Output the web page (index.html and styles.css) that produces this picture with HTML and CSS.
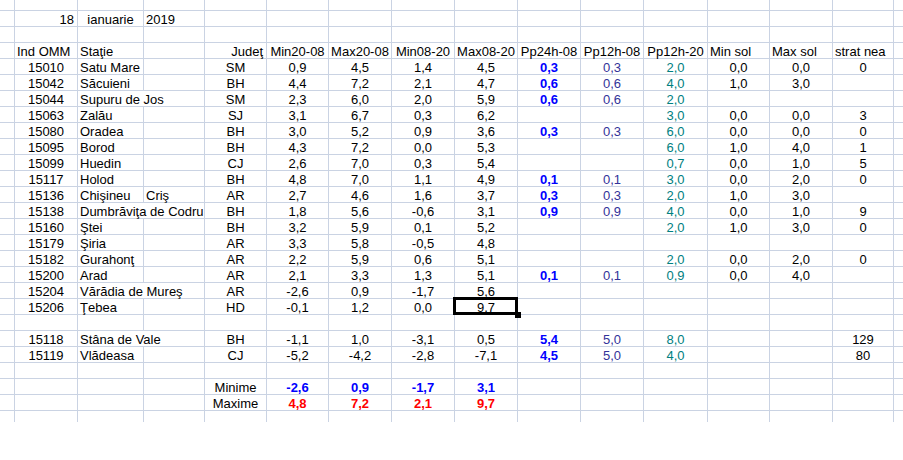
FILE: index.html
```html
<!DOCTYPE html>
<html>
<head>
<meta charset="utf-8">
<link rel="stylesheet" href="styles.css">
</head>
<body>
<table class="sheet">
<colgroup>
<col class="w15"><col class="w63"><col class="w66"><col class="w61"><col class="w62"><col class="w62"><col class="w63"><col class="w63"><col class="w63"><col class="w63"><col class="w63"><col class="w64"><col class="w62"><col class="w63"><col class="w61"><col class="w9">
</colgroup>
<tr class="top"><td></td><td></td><td></td><td></td><td></td><td></td><td></td><td></td><td></td><td></td><td></td><td></td><td></td><td></td><td></td><td></td></tr>
<tr><td></td><td class="rt">18</td><td>ianuarie</td><td class="l">2019</td><td></td><td></td><td></td><td></td><td></td><td></td><td></td><td></td><td></td><td></td><td></td><td></td></tr>
<tr><td></td><td></td><td></td><td></td><td></td><td></td><td></td><td></td><td></td><td></td><td></td><td></td><td></td><td></td><td></td><td></td></tr>
<tr><td></td><td class="l">Ind OMM</td><td class="l">Staţie</td><td></td><td class="rt">Judeţ</td><td>Min20-08</td><td>Max20-08</td><td>Min08-20</td><td>Max08-20</td><td>Pp24h-08</td><td>Pp12h-08</td><td>Pp12h-20</td><td class="l">Min sol</td><td class="l">Max sol</td><td class="l">strat nea</td><td></td></tr>
<tr><td></td><td>15010</td><td class="l">Satu Mare</td><td></td><td>SM</td><td>0,9</td><td>4,5</td><td>1,4</td><td>4,5</td><td class="b">0,3</td><td class="db">0,3</td><td class="tl">2,0</td><td>0,0</td><td>0,0</td><td>0</td><td></td></tr>
<tr><td></td><td>15042</td><td class="l">Săcuieni</td><td></td><td>BH</td><td>4,4</td><td>7,2</td><td>2,1</td><td>4,7</td><td class="b">0,6</td><td class="db">0,6</td><td class="tl">4,0</td><td>1,0</td><td>3,0</td><td></td><td></td></tr>
<tr><td></td><td>15044</td><td class="l" colspan="2">Supuru de Jos</td><td>SM</td><td>2,3</td><td>6,0</td><td>2,0</td><td>5,9</td><td class="b">0,6</td><td class="db">0,6</td><td class="tl">2,0</td><td></td><td></td><td></td><td></td></tr>
<tr><td></td><td>15063</td><td class="l">Zalău</td><td></td><td>SJ</td><td>3,1</td><td>6,7</td><td>0,3</td><td>6,2</td><td></td><td></td><td class="tl">3,0</td><td>0,0</td><td>0,0</td><td>3</td><td></td></tr>
<tr><td></td><td>15080</td><td class="l">Oradea</td><td></td><td>BH</td><td>3,0</td><td>5,2</td><td>0,9</td><td>3,6</td><td class="b">0,3</td><td class="db">0,3</td><td class="tl">6,0</td><td>0,0</td><td>0,0</td><td>0</td><td></td></tr>
<tr><td></td><td>15095</td><td class="l">Borod</td><td></td><td>BH</td><td>4,3</td><td>7,2</td><td>0,0</td><td>5,3</td><td></td><td></td><td class="tl">6,0</td><td>1,0</td><td>4,0</td><td>1</td><td></td></tr>
<tr><td></td><td>15099</td><td class="l">Huedin</td><td></td><td>CJ</td><td>2,6</td><td>7,0</td><td>0,3</td><td>5,4</td><td></td><td></td><td class="tl">0,7</td><td>0,0</td><td>1,0</td><td>5</td><td></td></tr>
<tr><td></td><td>15117</td><td class="l">Holod</td><td></td><td>BH</td><td>4,8</td><td>7,0</td><td>1,1</td><td>4,9</td><td class="b">0,1</td><td class="db">0,1</td><td class="tl">3,0</td><td>0,0</td><td>2,0</td><td>0</td><td></td></tr>
<tr><td></td><td>15136</td><td class="l">Chişineu</td><td class="l">Criş</td><td>AR</td><td>2,7</td><td>4,6</td><td>1,6</td><td>3,7</td><td class="b">0,3</td><td class="db">0,3</td><td class="tl">2,0</td><td>1,0</td><td>3,0</td><td></td><td></td></tr>
<tr><td></td><td>15138</td><td class="l" colspan="2">Dumbrăviţa de Codru</td><td>BH</td><td>1,8</td><td>5,6</td><td>-0,6</td><td>3,1</td><td class="b">0,9</td><td class="db">0,9</td><td class="tl">4,0</td><td>0,0</td><td>1,0</td><td>9</td><td></td></tr>
<tr><td></td><td>15160</td><td class="l">Ştei</td><td></td><td>BH</td><td>3,2</td><td>5,9</td><td>0,1</td><td>5,2</td><td></td><td></td><td class="tl">2,0</td><td>1,0</td><td>3,0</td><td>0</td><td></td></tr>
<tr><td></td><td>15179</td><td class="l">Şiria</td><td></td><td>AR</td><td>3,3</td><td>5,8</td><td>-0,5</td><td>4,8</td><td></td><td></td><td></td><td></td><td></td><td></td><td></td></tr>
<tr><td></td><td>15182</td><td class="l">Gurahonţ</td><td></td><td>AR</td><td>2,2</td><td>5,9</td><td>0,6</td><td>5,1</td><td></td><td></td><td class="tl">2,0</td><td>0,0</td><td>2,0</td><td>0</td><td></td></tr>
<tr><td></td><td>15200</td><td class="l">Arad</td><td></td><td>AR</td><td>2,1</td><td>3,3</td><td>1,3</td><td>5,1</td><td class="b">0,1</td><td class="db">0,1</td><td class="tl">0,9</td><td>0,0</td><td>4,0</td><td></td><td></td></tr>
<tr><td></td><td>15204</td><td class="l" colspan="2">Vărădia de Mureş</td><td>AR</td><td>-2,6</td><td>0,9</td><td>-1,7</td><td>5,6</td><td></td><td></td><td></td><td></td><td></td><td></td><td></td></tr>
<tr><td></td><td>15206</td><td class="l">Ţebea</td><td></td><td>HD</td><td>-0,1</td><td>1,2</td><td>0,0</td><td class="sel">9,7</td><td></td><td></td><td></td><td></td><td></td><td></td><td></td></tr>
<tr><td></td><td></td><td></td><td></td><td></td><td></td><td></td><td></td><td></td><td></td><td></td><td></td><td></td><td></td><td></td><td></td></tr>
<tr><td></td><td>15118</td><td class="l" colspan="2">Stâna de Vale</td><td>BH</td><td>-1,1</td><td>1,0</td><td>-3,1</td><td>0,5</td><td class="b">5,4</td><td class="db">5,0</td><td class="tl">8,0</td><td></td><td></td><td>129</td><td></td></tr>
<tr><td></td><td>15119</td><td class="l">Vlădeasa</td><td></td><td>CJ</td><td>-5,2</td><td>-4,2</td><td>-2,8</td><td>-7,1</td><td class="b">4,5</td><td class="db">5,0</td><td class="tl">4,0</td><td></td><td></td><td>80</td><td></td></tr>
<tr><td></td><td></td><td></td><td></td><td></td><td></td><td></td><td></td><td></td><td></td><td></td><td></td><td></td><td></td><td></td><td></td></tr>
<tr><td></td><td></td><td></td><td></td><td>Minime</td><td class="b">-2,6</td><td class="b">0,9</td><td class="b">-1,7</td><td class="b">3,1</td><td></td><td></td><td></td><td></td><td></td><td></td><td></td></tr>
<tr><td></td><td></td><td></td><td></td><td>Maxime</td><td class="r">4,8</td><td class="r">7,2</td><td class="r">2,1</td><td class="r">9,7</td><td></td><td></td><td></td><td></td><td></td><td></td><td></td></tr>
<tr class="end"><td></td><td></td><td></td><td></td><td></td><td></td><td></td><td></td><td></td><td></td><td></td><td></td><td></td><td></td><td></td><td></td></tr>
</table>
</body>
</html>
```
FILE: styles.css
```css
html, body {
  margin: 0;
  padding: 0;
  background: #ffffff;
}

.sheet {
  border-collapse: separate;
  border-spacing: 0;
  table-layout: fixed;
  width: 903px;
  font-family: "Liberation Sans", Arial, sans-serif;
  font-size: 13px;
  color: #000000;
}

.w9 { width: 9px; }
.w15 { width: 15px; }
.w61 { width: 61px; }
.w62 { width: 62px; }
.w63 { width: 63px; }
.w64 { width: 64px; }
.w66 { width: 66px; }

.sheet tr {
  height: 16px;
}

.sheet tr.top,
.sheet tr.end {
  height: 11px;
}

.sheet td {
  box-sizing: border-box;
  padding: 0 2px;
  border-right: 1px solid #cad3e3;
  border-bottom: 1px solid #cad3e3;
  line-height: 13px;
  vertical-align: bottom;
  text-align: center;
  white-space: nowrap;
  overflow: visible;
}

.sheet td:last-child {
  border-right: none;
}

.sheet tr.end td {
  border-bottom: none;
}

.sheet td.l { text-align: left; }
.sheet td.rt { text-align: right; padding-right: 3px; }

.b { color: #0000ff; font-weight: bold; }
.r { color: #ff0000; font-weight: bold; }
.db { color: #333399; }
.tl { color: #008080; }

.sheet td.sel {
  position: relative;
}

.sheet td.sel::before {
  content: "";
  position: absolute;
  left: -2px;
  top: -2px;
  right: -1px;
  bottom: -1px;
  border: 3px solid #000000;
}

.sheet td.sel::after {
  content: "";
  position: absolute;
  left: 60px;
  top: 13px;
  width: 6px;
  height: 6px;
  background: #000000;
}
```
